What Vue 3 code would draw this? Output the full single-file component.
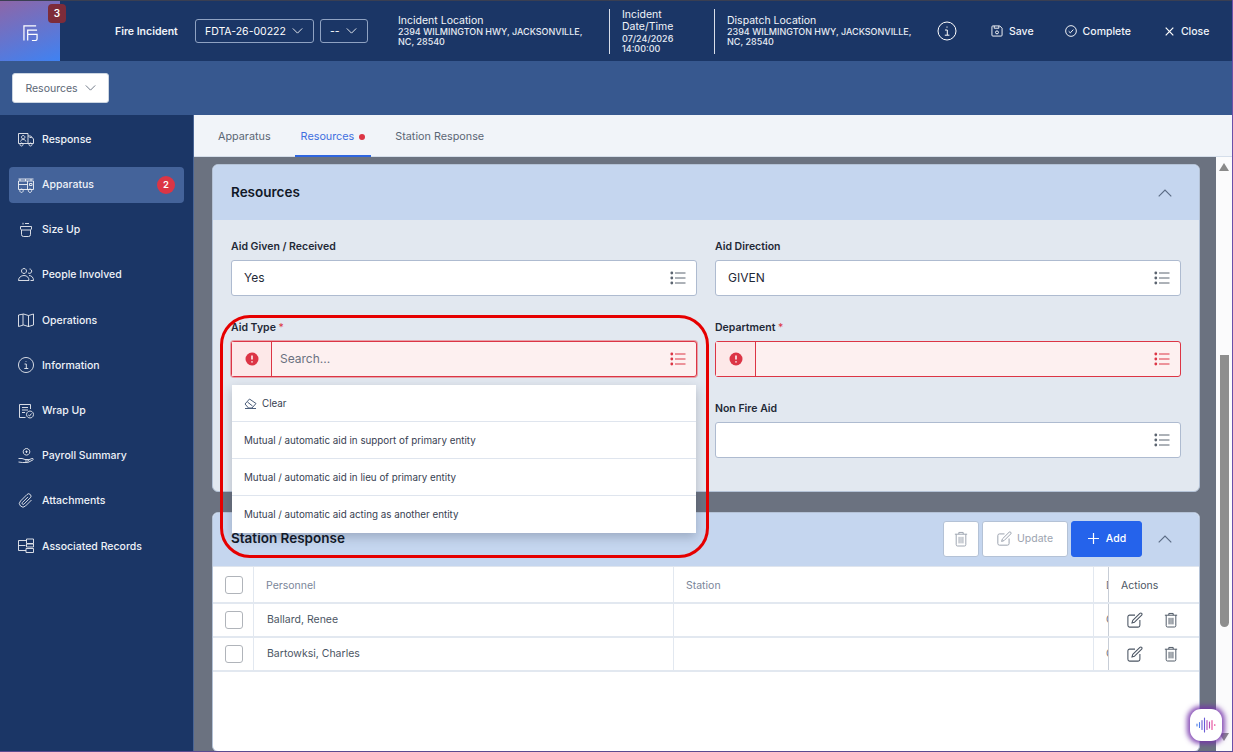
<script setup>
const navItems = [
  { label: 'Response', d: 'M.5 2.500h9.500v10H.5zM10 5h2.800L15.500 8v4.500H10M5.200 4.500a1.700 1.700 0 1 0 .01 0M2.500 10.500c.4-1.500 1.500-2 2.700-2s2.300.5 2.700 2M3.500 12a1.500 1.500 0 1 0 .01 0M12.500 12a1.500 1.500 0 1 0 .01 0M11.500 6.500h2.200' },
  { label: 'Apparatus', active: true, badge: 2, d: 'M.5 2h15M2 2v2M7.500 2v2M13 2v2M.5 4h15v8.500H.5zM.5 7.500h9M9.500 4v8.500M11.500 6.500h2.500v2h-2.500zM3.500 12a1.700 1.700 0 1 0 .01 0M12 12a1.700 1.700 0 1 0 .01 0' },
  { label: 'Size Up', d: 'M2.500 4.500h11v2.500l-1 1v4.500a2 2 0 0 1-2 2h-5a2 2 0 0 1-2-2V8l-1-1zM3.500 8h9M5 2.500V.8M7 1.500h4' },
  { label: 'People Involved', d: 'M6 1.500a2.500 2.500 0 1 0 .01 0M11.500 2a2.200 2.200 0 1 1-1.500 3.800M.5 13.500c0-3 2.500-5 5.500-5s5 2 5 5zM11 8.500c2.500 0 4.500 1.800 4.500 5h-3' },
  { label: 'Operations', d: 'M.5 3l5-1 5 1.500 5-1.500v11l-5 1.500-5-1.500-5 1.500zM5 2v11M10.500 3.500V15' },
  { label: 'Information', d: 'M8 .5a7.500 7.500 0 1 0 .01 0M8 4v.7M6.500 7h1.800v4.500M6.300 11.500h4' },
  { label: 'Wrap Up', d: 'M12.500 6V1.500H1.500v13h6M4 4.500h6M4 7h6M4 9.500h3M12 8a3.500 3.500 0 1 0 .01 0M10.300 12l1.200 1 2-2.500' },
  { label: 'Payroll Summary', d: 'M8.500 .5a3.300 3.300 0 1 0 .01 0M8.500 2.500v2.500M7.300 3.700h2.400M.5 10.500h3.500l3 1h3c1 0 1 1.500 0 1.500h-3M10 12l4-1.500c1.200-.4 1.800 1 .8 1.500l-5 2.500H4.500l-4-.5' },
  { label: 'Attachments', d: 'M13.500 7l-6 6a3.500 3.500 0 0 1-5-5l6.500-6.500a2.300 2.300 0 0 1 3.300 3.300l-6.300 6.300a1.100 1.100 0 0 1-1.600-1.600l5.600-5.600' },
  { label: 'Associated Records', d: 'M.5 2.500h8M.5 2.500v10M.5 7.500h7M.5 12.500H8M8.500 1H15.500v4.500H8.500zM8.500 6H15.500v3H8.500zM8 10.500H15.500v4H8z' },
]
const options = [
  'Mutual / automatic aid in support of primary entity',
  'Mutual / automatic aid in lieu of primary entity',
  'Mutual / automatic aid acting as another entity',
]
const people = ['Ballard, Renee', 'Bartowksi, Charles']
</script>

<template>
  <div class="app">
    <svg class="defs" aria-hidden="true">
      <symbol id="list" viewBox="0 0 16 14">
        <g fill="currentColor"><circle cx="1.800" cy="2" r="1.400" /><circle cx="1.800" cy="7" r="1.400" /><circle cx="1.800" cy="12" r="1.400" /></g>
        <path d="M5 2h10.500M5 7h10.500M5 12h10.500" fill="none" stroke="currentColor" />
      </symbol>
      <symbol id="trash" viewBox="0 0 16 18">
        <path d="M1 3.500h14M5.500 3.500V1.500h5v2M2.500 3.500v12a1.500 1.500 0 0 0 1.500 1.500h8a1.500 1.500 0 0 0 1.500-1.500v-12M5.800 6.500v7.500M8 6.500v7.500M10.200 6.500v7.500" fill="none" stroke="currentColor" stroke-width="1.100" />
      </symbol>
      <symbol id="edit" viewBox="0 0 18 18">
        <path d="M9 3.500H3a2 2 0 0 0-2 2V15a2 2 0 0 0 2 2h9.500a2 2 0 0 0 2-2V9M6.500 9.500l8-8a1.400 1.400 0 0 1 2 2l-8 8-3 1z" fill="none" stroke="currentColor" stroke-width="1.200" stroke-linejoin="round" />
      </symbol>
      <symbol id="chev" viewBox="0 0 12 7">
        <path d="M.5.500 6 6 11.500.500" fill="none" stroke="currentColor" />
      </symbol>
    </svg>

    <header class="topbar">
      <div class="logo">
        <svg width="15" height="16" viewBox="0 0 16 17" fill="none" stroke="#fff" stroke-width="1.300">
          <path d="M14 1H1v15.500M5 16.500V5.500H15M5 10H15v4.500a2 2 0 0 1-2 2H9.500" />
        </svg>
        <span class="logo-badge">3</span>
      </div>
      <span class="record">Fire Incident</span>
      <button class="pick pick-a">FDTA-26-00222 <svg class="chev" width="11" height="6"><use href="#chev" /></svg></button>
      <button class="pick pick-b">-- <svg class="chev" width="11" height="6"><use href="#chev" /></svg></button>
      <div class="info info-loc">
        <div class="info-title">Incident Location</div>
        <div class="info-text">2394 WILMINGTON HWY, JACKSONVILLE, NC, 28540</div>
      </div>
      <div class="info info-date">
        <div class="info-title">Incident Date/Time</div>
        <div class="info-text">07/24/2026 14:00:00</div>
      </div>
      <div class="info info-disp">
        <div class="info-title">Dispatch Location</div>
        <div class="info-text">2394 WILMINGTON HWY, JACKSONVILLE, NC, 28540</div>
      </div>
      <svg class="i-info" width="20" height="20" viewBox="0 0 20 20" fill="none" stroke="#fff">
        <circle cx="10" cy="10" r="9" /><path d="M10 5.500v1.200M8 9h2.300v5M7.800 14.200h4.600" />
      </svg>
      <button class="act act-save">
        <svg width="12" height="12" viewBox="0 0 13 13" fill="none" stroke="#fff"><path d="M1 2a1 1 0 0 1 1-1h7.500L12 3.500V11a1 1 0 0 1-1 1H2a1 1 0 0 1-1-1zM3.500 1v2.500h5V1" /><circle cx="6.500" cy="8" r="1.600" /></svg>
        Save
      </button>
      <button class="act act-complete">
        <svg width="12" height="12" viewBox="0 0 13 13" fill="none" stroke="#fff"><circle cx="6.500" cy="6.500" r="5.800" /><path d="M4 6.800l1.800 1.700L9 5" /></svg>
        Complete
      </button>
      <button class="act act-close">
        <svg width="9" height="9" viewBox="0 0 9 9" fill="none" stroke="#fff" stroke-width="1.200"><path d="M.7.700l7.600 7.600M8.300.700.700 8.300" /></svg>
        Close
      </button>
    </header>

    <div class="subbar">
      <button class="section-pick">Resources <svg class="chev" width="11" height="6"><use href="#chev" /></svg></button>
    </div>

    <div class="body">
      <nav class="sidebar">
        <a v-for="item in navItems" :key="item.label" class="nav-item" :class="{ active: item.active }">
          <svg class="nav-icon" width="16" height="16" viewBox="0 0 16 16" fill="none" stroke="#fff" stroke-width=".9">
            <path :d="item.d" />
          </svg>
          <span>{{ item.label }}</span>
          <b v-if="item.badge" class="nav-badge">{{ item.badge }}</b>
        </a>
      </nav>

      <main class="main">
        <div class="tabs">
          <a class="tab">Apparatus</a>
          <a class="tab tab-active">Resources <i class="dot"></i></a>
          <a class="tab">Station Response</a>
        </div>

        <div class="scroll">
          <div class="content">
            <section class="card">
              <div class="card-head">
                <h2>Resources</h2>
                <svg class="collapse" width="14" height="8"><use href="#chev" /></svg>
              </div>
              <div class="form">
                <div class="field">
                  <label>Aid Given / Received</label>
                  <div class="input">Yes <svg class="list" width="16" height="14"><use href="#list" /></svg></div>
                </div>
                <div class="field">
                  <label>Aid Direction</label>
                  <div class="input">GIVEN <svg class="list" width="16" height="14"><use href="#list" /></svg></div>
                </div>
                <div class="field aid-type">
                  <label>Aid Type <em>*</em></label>
                  <div class="input error focus">
                    <span class="err-box"><svg width="14" height="14" viewBox="0 0 14 14"><circle cx="7" cy="7" r="6.500" fill="#dc3545" /><path d="M7 3.500v4M7 9.300v1.300" stroke="#fff" stroke-width="1.500" /></svg></span>
                    <span class="placeholder">Search...</span>
                    <svg class="list" width="16" height="14"><use href="#list" /></svg>
                  </div>
                  <ul class="menu">
                    <li class="clear">
                      <svg width="13" height="11" viewBox="0 0 13 11" fill="none" stroke="#4b5d7a"><path d="M1 6l4.500-5L12 5.500 8 10H4.500zM3.500 4l5 4M1 10.500h11" /></svg>
                      Clear
                    </li>
                    <li v-for="o in options" :key="o">{{ o }}</li>
                  </ul>
                  <div class="annotation"></div>
                </div>
                <div class="field">
                  <label>Department <em>*</em></label>
                  <div class="input error">
                    <span class="err-box"><svg width="14" height="14" viewBox="0 0 14 14"><circle cx="7" cy="7" r="6.500" fill="#dc3545" /><path d="M7 3.500v4M7 9.300v1.300" stroke="#fff" stroke-width="1.500" /></svg></span>
                    <svg class="list" width="16" height="14"><use href="#list" /></svg>
                  </div>
                </div>
                <div class="field second">
                  <label>Non Fire Aid</label>
                  <div class="input"><svg class="list" width="16" height="14"><use href="#list" /></svg></div>
                </div>
              </div>
            </section>

            <section class="card card-table">
              <div class="card-head table-head">
                <h2>Station Response</h2>
                <div class="tools">
                  <button class="tool tool-del"><svg width="14" height="16"><use href="#trash" /></svg></button>
                  <button class="tool tool-upd"><svg width="15" height="15"><use href="#edit" /></svg> Update</button>
                  <button class="tool tool-add"><svg width="13" height="13" viewBox="0 0 13 13" stroke="#fff" stroke-width="1.200"><path d="M6.500 1v11M1 6.500h11" /></svg> Add</button>
                  <svg class="collapse" width="14" height="8"><use href="#chev" /></svg>
                </div>
              </div>
              <div class="table-wrap">
                <div class="row row-head">
                  <div class="c c-check"><i class="box"></i></div>
                  <div class="c c-name">Personnel</div>
                  <div class="c c-name">Station</div>
                  <div class="c c-extra">D</div>
                  <div class="c c-actions">Actions</div>
                </div>
                <div v-for="p in people" :key="p" class="row">
                  <div class="c c-check"><i class="box"></i></div>
                  <div class="c c-name">{{ p }}</div>
                  <div class="c c-name"></div>
                  <div class="c c-extra">C</div>
                  <div class="c c-actions">
                    <svg width="16" height="16"><use href="#edit" /></svg>
                    <svg width="14" height="16"><use href="#trash" /></svg>
                  </div>
                </div>
              </div>
            </section>
          </div>

          <div class="scrollbar">
            <i class="arrow up"></i>
            <i class="thumb"></i>
            <i class="arrow down"></i>
          </div>
        </div>
      </main>
    </div>

    <button class="voice" aria-label="Voice">
      <svg width="20" height="16" viewBox="0 0 20 16" fill="none" stroke-width="1.100" stroke-linecap="round">
        <path d="M1 7v2M3.500 5.500v5" stroke="#4f7de8" />
        <path d="M6 3.500v9M8.500 1v14" stroke="#6a5bd6" />
        <path d="M11 3.500v9M13.500 5v6" stroke="#b04bb8" />
        <path d="M16 3.500v9M18.800 7.500v1" stroke="#e6489a" />
      </svg>
    </button>
  </div>
</template>

<style scoped>
.defs { position: absolute; width: 0; height: 0; }
.app {
  position: relative;
  width: 1233px;
  height: 752px;
  box-sizing: border-box;
  display: flex;
  flex-direction: column;
  overflow: hidden;
  font-family: Inter, "Liberation Sans", sans-serif;
  border-right: 1px solid #6b4fa8;
  border-bottom: 1px solid #5a4a90;
  background: #fff;
}
button { font-family: inherit; cursor: pointer; }

.topbar {
  flex: 0 0 61px;
  box-sizing: border-box;
  display: flex;
  align-items: center;
  background: #1b3666;
  border-top: 1px solid #3a3f52;
  color: #fff;
}
.logo {
  position: relative;
  align-self: stretch;
  width: 60px;
  display: flex;
  align-items: center;
  justify-content: center;
  background: linear-gradient(160deg, #8d66a8 0%, #3f82f2 100%);
  margin-right: 55px;
}
.logo svg { margin-top: 3px; }
.logo-badge {
  position: absolute;
  left: 48px;
  top: 3px;
  width: 18px;
  height: 19px;
  border-radius: 4px;
  background: #7d2c3a;
  font-size: 10px;
  font-weight: 600;
  line-height: 19px;
  text-align: center;
}
.record { width: 80px; font-size: 10.500px; font-weight: 600; color: #f1f4f9; white-space: nowrap; }
.pick {
  height: 24px;
  box-sizing: border-box;
  display: flex;
  align-items: center;
  justify-content: space-between;
  padding: 0 10px 0 9px;
  background: transparent;
  border: 1px solid #8fa2c2;
  border-radius: 3px;
  color: #fff;
  font-size: 10.500px;
  white-space: nowrap;
}
.pick-a { width: 119px; margin-right: 6px; }
.pick-b { width: 48px; margin-right: 30px; }
.chev { flex: none; }
.info { align-self: center; box-sizing: border-box; }
.info-title { font-size: 10.500px; line-height: 13px; color: #f1f4f9; }
.info-text { font-size: 9px; line-height: 10px; font-weight: 500; color: #e6ebf3; }
.info-loc { width: 212px; padding: 5.500px 24px 0 0; border-right: 1px solid #d8dee9; height: 45px; }
.info-date { width: 105px; padding: 0 40px 0 12px; height: 45px; border-right: 1px solid #d8dee9; }
.info-date .info-title { line-height: 12.500px; }
.info-disp { width: 222px; padding: 5.500px 20px 0 12px; height: 45px; }
.i-info { margin-right: 34px; flex: none; }
.act {
  display: flex;
  align-items: center;
  gap: 6px;
  padding: 0;
  background: none;
  border: 0;
  color: #f1f4f9;
  font-size: 10.500px;
  font-weight: 500;
}
.act-save { margin-right: 31px; }
.act-complete { margin-right: 34px; }
.act-close { gap: 7px; }

.subbar {
  flex: 0 0 54px;
  box-sizing: border-box;
  padding: 12px;
  background: #37588f;
}
.section-pick {
  width: 97px;
  height: 30px;
  display: flex;
  align-items: center;
  justify-content: center;
  gap: 7px;
  padding: 0;
  background: #fff;
  border: 1px solid #cbd5e1;
  border-radius: 3px;
  color: #5b6675;
  font-size: 10.500px;
}

.body { flex: 1; display: flex; min-height: 0; }
.sidebar {
  flex: 0 0 194px;
  box-sizing: border-box;
  padding: 6.400px 9px 0;
  background: #1b3666;
  border-right: 1px solid #4a6594;
}
.nav-item {
  height: 36px;
  display: flex;
  align-items: center;
  margin-bottom: 9.200px;
  padding: 0 9px;
  border-radius: 4px;
  color: #eef2f8;
  font-size: 10.500px;
  font-weight: 500;
  width: 175px;
  box-sizing: border-box;
}
.nav-item.active { background: #44639a; }
.nav-icon { flex: none; margin-right: 8px; opacity: .92; }
.nav-badge {
  margin-left: auto;
  width: 18px;
  height: 18px;
  border-radius: 50%;
  background: #dc3545;
  color: #fff;
  font-size: 9.500px;
  font-weight: 600;
  line-height: 18px;
  text-align: center;
}

.main { flex: 1; min-width: 0; display: flex; flex-direction: column; }
.tabs {
  flex: 0 0 42px;
  box-sizing: border-box;
  display: flex;
  background: #f1f4f9;
  padding-left: 18px;
  box-shadow: inset 0 -1px #d5deea;
}
.tab {
  display: flex;
  align-items: center;
  padding: 1px 6px 0;
  margin-right: 18px;
  height: 42px;
  box-sizing: border-box;
  font-size: 10.800px;
  color: #5b6675;
}
.tab-active {
  color: #3f6fe0;
  border-bottom: 2px solid #2f66e0;
  padding-top: 3px;
}
.dot {
  width: 6px;
  height: 6px;
  margin-left: 5px;
  border-radius: 50%;
  background: #dc3545;
}

.scroll { flex: 1; min-height: 0; display: flex; }
.content {
  flex: 1;
  min-width: 0;
  box-sizing: border-box;
  padding: 7px 16px 0 18px;
  background: #6b7280;
  overflow: hidden;
}
.card {
  border: 1px solid #b4c2d6;
  border-radius: 6px;
  background: #e2e8f0;
  box-sizing: border-box;
  height: 328px;
}
.card-head {
  height: 55px;
  display: flex;
  align-items: center;
  justify-content: space-between;
  padding: 0 27px 0 18px;
  background: #c5d6ef;
  border-radius: 5px 5px 0 0;
}
.card-head h2 { margin: 0 0 1px; font-size: 13.500px; font-weight: 600; color: #111827; }
.collapse { color: #5b6b84; flex: none; transform: scaleY(-1); }
.form {
  display: grid;
  grid-template-columns: 466px 466px;
  column-gap: 18px;
  row-gap: 25px;
  padding: 20px 18px 0;
}
.field { position: relative; min-width: 0; }
.second { grid-column: 2; }
label {
  display: block;
  height: 14px;
  margin-bottom: 6px;
  font-size: 10.500px;
  line-height: 14px;
  font-weight: 600;
  color: #1f2937;
}
label em { font-style: normal; font-weight: 400; color: #dc3545; }
.input {
  position: relative;
  height: 36px;
  box-sizing: border-box;
  display: flex;
  align-items: center;
  padding: 0 12px 1px;
  background: #fff;
  border: 1px solid #aebbd0;
  border-radius: 3px;
  font-size: 12px;
  color: #1f2937;
}
.list { position: absolute; right: 10px; top: 10px; color: #5b6470; }
.input.error {
  background: #fdf0f0;
  border-color: #dc3545;
  padding: 0;
}
.input.error .list { color: #dc3545; }
.focus { box-shadow: 0 0 0 1px #e6a3aa; }
.err-box {
  flex: 0 0 40px;
  box-sizing: border-box;
  align-self: stretch;
  display: flex;
  align-items: center;
  justify-content: center;
  background: #fde8e8;
  border-right: 1px solid #dc3545;
}
.placeholder { margin: 0 0 2px 8px; font-size: 12px; color: #6b7280; }
.menu {
  position: absolute;
  left: 1px;
  top: 64px;
  z-index: 5;
  width: 464px;
  margin: 0;
  padding: 0;
  list-style: none;
  background: #fff;
  box-shadow: 0 4px 10px rgba(30, 41, 59, .25);
}
.menu li {
  height: 37px;
  box-sizing: border-box;
  display: flex;
  align-items: center;
  gap: 5px;
  padding: 0 12px;
  border-bottom: 1px solid #dfe5ee;
  font-size: 9.800px;
  color: #374151;
}
.menu li:last-child { border-bottom: 0; }
.annotation {
  position: absolute;
  z-index: 6;
  left: -11px;
  top: -6px;
  width: 489px;
  height: 243px;
  box-sizing: border-box;
  border: 3.500px solid #e60000;
  border-radius: 30px;
  pointer-events: none;
}

.card-table { margin-top: 20px; height: 240px; background: #fff; }
.table-head { height: 53px; border-bottom: 1px solid #dfe5ee; }
.table-head h2 { margin-bottom: 3px; }
.tools { display: flex; align-items: center; padding-bottom: 2px; }
.tool {
  height: 36px;
  display: flex;
  align-items: center;
  justify-content: center;
  padding: 0;
  background: #fff;
  border: 1px solid #b4c2d6;
  border-radius: 3px;
  color: #9ca3af;
  font-size: 10.500px;
}
.tool-del { width: 36px; margin-right: 3px; }
.tool-upd { width: 86px; margin-right: 3px; gap: 5px; }
.tool-add {
  width: 71px;
  margin-right: 16px;
  gap: 6px;
  background: #2563eb;
  border-color: #2563eb;
  color: #fff;
  font-weight: 500;
}
.table-wrap { position: relative; background: #fff; }
.row {
  display: flex;
  height: 34px;
  box-sizing: border-box;
  border-bottom: 2px solid #e2e8f0;
  font-size: 10.500px;
  color: #4b5563;
}
.row-head { height: 37px; color: #7a8699; }
.c {
  display: flex;
  align-items: center;
  box-sizing: border-box;
  border-right: 1px solid #e2e8f0;
}
.row-head .c { padding-top: 1px; }
.row:not(.row-head) .c { padding-bottom: 1px; }
.c-check { flex: 0 0 41px; justify-content: center; padding-left: 2px; }
.c-name { flex: 0 0 420px; padding-left: 12px; }
.row:not(.row-head) .c-name { padding-left: 13px; }
.c-extra { flex: 0 0 14px; padding-left: 12px; border-right: 0; overflow: hidden; color: #6b7280; }
.c-actions {
  flex: 0 0 90px;
  padding-left: 12px;
  gap: 21px;
  border-left: 1px solid #c7cdd6;
  border-right: 0;
  background: #fff;
  color: #4b5563;
}
.row:not(.row-head) .c-actions { padding-left: 18px; }
.box {
  width: 18px;
  height: 18px;
  box-sizing: border-box;
  border: 1px solid #b0b4ba;
  border-radius: 3px;
  background: #fff;
}

.scrollbar {
  position: relative;
  flex: 0 0 16px;
  background: #fbfbfc;
}
.thumb {
  position: absolute;
  left: 4px;
  top: 198px;
  width: 9px;
  height: 272px;
  border-radius: 0 0 5px 5px;
  background: #8e8e8e;
}
.arrow {
  position: absolute;
  left: 3px;
  width: 0;
  height: 0;
  border-left: 5px solid transparent;
  border-right: 5px solid transparent;
}
.arrow.up { top: 6px; border-bottom: 8px solid #8a8a8a; }
.arrow.down { top: 576px; border-top: 8px solid #8a8a8a; }

.voice {
  position: absolute;
  left: 1190px;
  top: 709px;
  width: 32px;
  height: 32px;
  display: flex;
  align-items: center;
  justify-content: center;
  padding: 0;
  background: #fff;
  border: 0;
  border-radius: 11px;
  box-shadow: 0 0 5px 3px rgba(116, 50, 170, .85);
}
</style>
